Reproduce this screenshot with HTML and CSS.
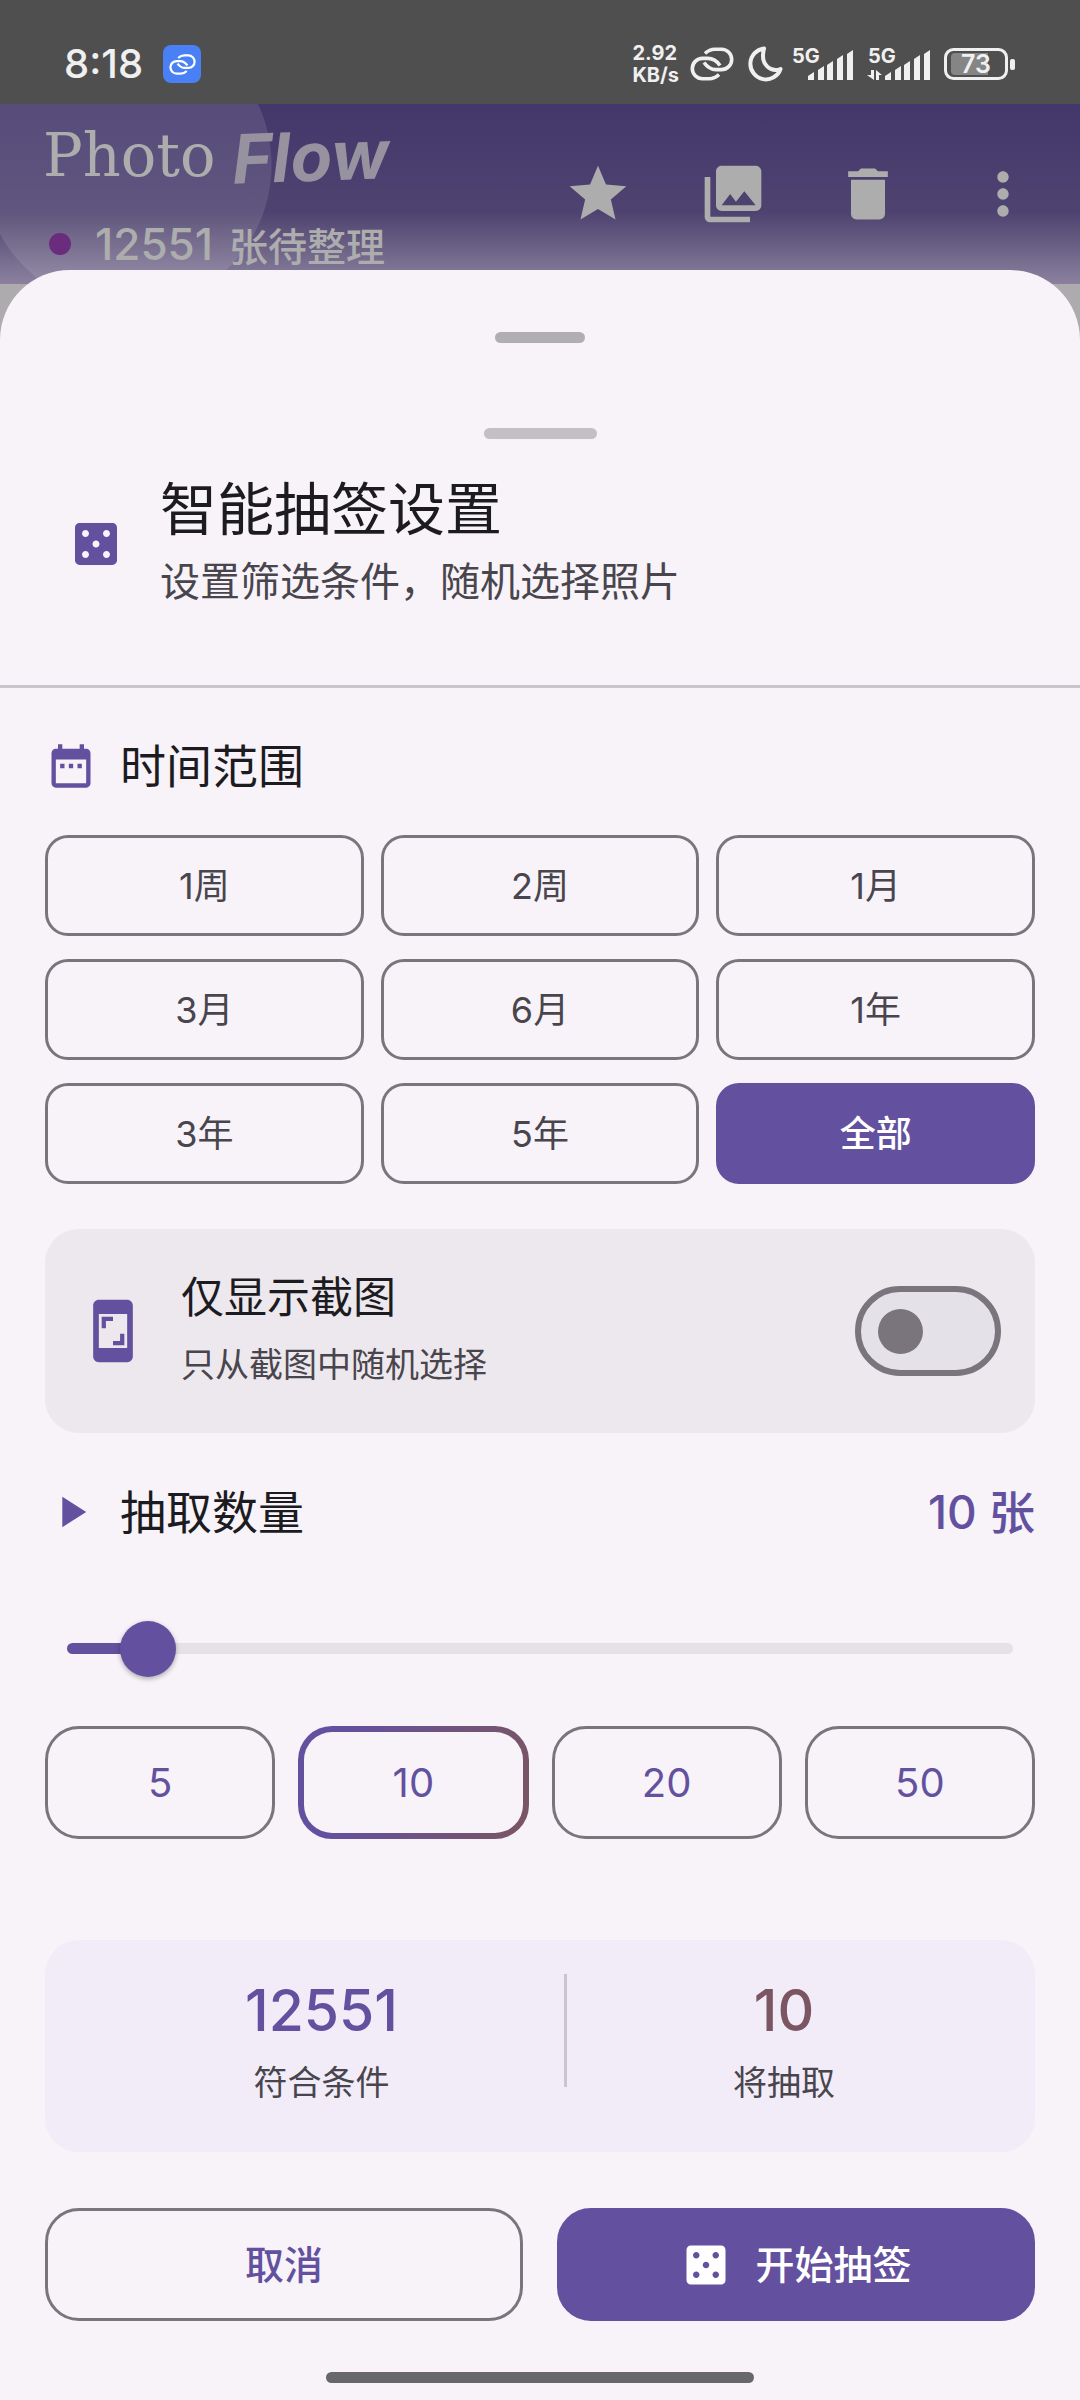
FILE: index.html
```html
<!DOCTYPE html>
<html lang="zh-CN">
<head>
<meta charset="utf-8">
<meta name="viewport" content="width=device-width, initial-scale=1">
<title>Photo Flow</title>
<link rel="stylesheet" href="styles.css">
</head>
<body>
<svg class="defs" aria-hidden="true">
  <symbol id="dice" viewBox="0 0 24 24"><path d="M19 3H5c-1.1 0-2 .9-2 2v14c0 1.100.9 2 2 2h14c1.100 0 2-.9 2-2V5c0-1.100-.9-2-2-2zM7.500 18c-.83 0-1.500-.67-1.500-1.500S6.670 15 7.500 15s1.500.67 1.500 1.500S8.330 18 7.500 18zm0-9C6.670 9 6 8.330 6 7.500S6.670 6 7.500 6 9 6.670 9 7.500 8.330 9 7.500 9zm4.500 4.500c-.83 0-1.500-.67-1.500-1.500s.67-1.500 1.500-1.500 1.500.67 1.500 1.500-.67 1.500-1.500 1.500zm4.500 4.500c-.83 0-1.500-.67-1.500-1.500s.67-1.500 1.500-1.500 1.500.67 1.500 1.500-.67 1.500-1.500 1.500zm0-9c-.83 0-1.500-.67-1.500-1.500S15.670 6 16.500 6s1.500.67 1.500 1.500S17.330 9 16.500 9z"/></symbol>
  <symbol id="link" viewBox="0 0 44 34"><g fill="none" stroke="currentColor" stroke-width="3.600"><path d="M15 6.500C18 3.500 21 2.200 25 2.200H31.500a10.200 10.200 0 0 1 0 20.400H26C21 22.600 17.500 20.500 14 15.500"/><path d="M29 27.500C26 30.500 23 31.800 19 31.800H12.500a10.200 10.200 0 0 1 0-20.400H18C23 11.400 26.500 13.500 30 18.500"/></g></symbol>
</svg>

<div class="statusbar">
  <span class="clock">8:18</span>
  <span class="app-badge"><svg width="27" height="21"><use href="#link"/></svg></span>
  <div class="indicators">
    <span class="netspeed"><span>2.92</span><span>KB/s</span></span>
    <svg class="ind-link" width="44" height="34"><use href="#link"/></svg>
    <svg class="ind-moon" width="36" height="36" viewBox="0 0 36 36"><path d="M17 2.500A15.500 15.500 0 1 0 33.500 23C25 26.500 12.500 20 17 2.500Z" fill="none" stroke="currentColor" stroke-width="4" stroke-linejoin="round"/></svg>
    <svg class="ind-signal" width="62" height="48" viewBox="0 -6 62 48"><text x="0" y="17">5G</text><path d="M16 34v-4l6-4v8zM26 34V24l6-4v14zM35 34V19l6-4v19zM45 34V13l6-4v25zM55 34V8l6-4v30z"/></svg>
    <svg class="ind-signal" width="64" height="48" viewBox="0 -6 64 48"><text x="1" y="17">5G</text><path d="M18 34v-4l6-4v8zM28 34V24l6-4v14zM37 34V19l6-4v19zM47 34V13l6-4v25zM57 34V8l6-4v30z"/><path d="M4 24h3v10L0 29h4zM9 34V24l6 5h-3v5z"/></svg>
    <svg class="ind-battery" width="72" height="32" viewBox="0 0 72 32"><rect x="1.500" y="1.500" width="61" height="29" rx="8" fill="none" stroke="currentColor" stroke-width="3"/><path d="M11 5H44V27H11a4 4 0 0 1-4-4V9a4 4 0 0 1 4-4z" fill="#858585"/><rect x="66" y="11" width="5" height="11" rx="2"/><text x="32" y="25" text-anchor="middle">73</text></svg>
  </div>
</div>

<header class="appbar">
  <div class="brand">
    <h1 class="brand-title"><span class="brand-photo">Photo</span><span class="brand-flow">Flow</span></h1>
    <p class="brand-count"><i class="dot"></i><span class="count-num">12551</span><span>张待整理</span></p>
  </div>
  <nav class="actions">
    <button class="icon-btn" aria-label="收藏"><svg viewBox="0 0 24 24"><path d="M12 17.270L18.180 21l-1.640-7.030L22 9.240l-7.190-.61L12 2 9.190 8.630 2 9.240l5.460 4.730L5.820 21z"/></svg></button>
    <button class="icon-btn" aria-label="相册"><svg viewBox="0 0 24 24"><path d="M22 16V4c0-1.100-.9-2-2-2H8c-1.100 0-2 .9-2 2v12c0 1.100.9 2 2 2h12c1.100 0 2-.9 2-2zm-11-4l2.030 2.710L16 11l4 5H8l3-4zM2 6v14c0 1.100.9 2 2 2h14v-2H4V6H2z"/></svg></button>
    <button class="icon-btn" aria-label="删除"><svg viewBox="0 0 24 24"><path d="M6 19c0 1.100.9 2 2 2h8c1.100 0 2-.9 2-2V7H6v12zM19 4h-3.500l-1-1h-5l-1 1H5v2h14V4z"/></svg></button>
    <button class="icon-btn" aria-label="更多"><svg viewBox="0 0 24 24"><path d="M12 8c1.100 0 2-.9 2-2s-.9-2-2-2-2 .9-2 2 .9 2 2 2zm0 2c-1.100 0-2 .9-2 2s.9 2 2 2 2-.9 2-2-.9-2-2-2zm0 6c-1.100 0-2 .9-2 2s.9 2 2 2 2-.9 2-2-.9-2-2-2z"/></svg></button>
  </nav>
</header>

<main class="sheet">
  <div class="grip"></div>
  <div class="grip grip-wide"></div>
  <div class="sheet-head">
    <svg class="head-icon"><use href="#dice"/></svg>
    <div>
      <h2 class="head-title">智能抽签设置</h2>
      <p class="head-sub">设置筛选条件，随机选择照片</p>
    </div>
  </div>

  <div class="content">
    <h3 class="section-title">
      <svg class="section-icon" viewBox="0 0 24 24"><path d="M9 11H7v2h2v-2zm4 0h-2v2h2v-2zm4 0h-2v2h2v-2zm2-7h-1V2h-2v2H8V2H6v2H5c-1.110 0-1.990.9-1.990 2L3 20c0 1.100.89 2 2 2h14c1.100 0 2-.9 2-2V6c0-1.100-.9-2-2-2zm0 16H5V9h14v11z"/></svg>
      <span>时间范围</span>
    </h3>
    <div class="ranges">
      <button class="range">1周</button><button class="range">2周</button><button class="range">1月</button>
      <button class="range">3月</button><button class="range">6月</button><button class="range">1年</button>
      <button class="range">3年</button><button class="range">5年</button><button class="range range-on">全部</button>
    </div>

    <label class="option" for="only-shots">
      <svg class="option-icon" viewBox="0 0 24 24"><path d="M17 1H7c-1.100 0-2 .9-2 2v18c0 1.100.9 2 2 2h10c1.100 0 2-.9 2-2V3c0-1.100-.9-2-2-2zm0 17H7V6h10v12z"/><path d="M8 7h4v1.500H9.500V11H8zM16 17h-4v-1.500h2.500V13H16z"/></svg>
      <span class="option-text"><span class="option-title">仅显示截图</span><span class="option-sub">只从截图中随机选择</span></span>
      <input class="switch" type="checkbox" id="only-shots">
    </label>

    <div class="amount-head">
      <h3 class="section-title">
        <svg class="section-icon" viewBox="0 0 24 24"><path d="M8 5v14l11-7z"/></svg>
        <label for="amount">抽取数量</label>
      </h3>
      <output class="amount-value" for="amount">10 张</output>
    </div>
    <input class="slider" type="range" id="amount" min="4" max="104" value="10">
    <div class="presets">
      <button class="preset">5</button><button class="preset preset-on">10</button><button class="preset">20</button><button class="preset">50</button>
    </div>

    <div class="stats">
      <div class="stat"><span class="stat-num">12551</span><span class="stat-label">符合条件</span></div>
      <div class="stat-line"></div>
      <div class="stat"><span class="stat-num stat-num-alt">10</span><span class="stat-label">将抽取</span></div>
    </div>

    <div class="footer">
      <button class="btn">取消</button>
      <button class="btn btn-primary"><svg class="btn-icon"><use href="#dice"/></svg><span>开始抽签</span></button>
    </div>
  </div>
  <div class="home-bar"></div>
</main>
</body>
</html>
```
FILE: styles.css
```css
:root {
  --primary: #63519f;
  --tertiary: #7b5562;
  --outline: #7a757c;
  --surface: #f7f3f9;
  --text: #1c1b1f;
  --text-soft: #49454d;
  --dim: #adadad;
}

* { box-sizing: border-box; }

body {
  margin: 0;
  background: #adabad;
  color: var(--text);
  font-family: Inter, "Noto Sans CJK SC", sans-serif;
}

h1, h2, h3, p { margin: 0; font-weight: 400; }

button {
  padding: 0;
  border: 0;
  background: none;
  color: inherit;
  font: inherit;
}

svg { display: block; fill: currentColor; flex: none; }

.defs { position: absolute; width: 0; height: 0; }

/* status bar */
.statusbar {
  display: flex;
  align-items: center;
  padding: 24px 64px 0;
  height: 104px;
  background: #4f4f4f;
  color: #f0f0f0;
}
.clock { font-size: 40px; font-weight: 500; line-height: 60px; }
.app-badge {
  display: grid;
  place-items: center;
  width: 38px;
  height: 38px;
  margin-left: 20px;
  border-radius: 8px;
  background: #4a80f5;
  color: #fff;
}
.indicators { display: flex; align-items: center; gap: 13px; margin-left: auto; }
.netspeed { display: flex; flex-direction: column; margin-right: -2px; font-size: 20px; font-weight: 700; line-height: 22px; }
.ind-moon { margin-right: -4px; }
.ind-signal { font-size: 20px; font-weight: 700; }
.ind-battery { font-size: 25px; font-weight: 600; }

/* app bar */
.appbar {
  display: flex;
  justify-content: space-between;
  align-items: center;
  height: 180px;
  padding: 0 10px 0 43px;
  background:
    radial-gradient(circle 145px at 127px 61px, rgba(255, 255, 255, .1) 144px, transparent 145px),
    linear-gradient(#43376b, #4e4370 60%, #5f557c 72%, #8b819e);
  color: var(--dim);
}
.brand-title { display: flex; align-items: center; gap: 17px; height: 100px; }
.brand-photo { font: 400 59px/70px "DejaVu Serif", serif; }
.brand-flow {
  color: #97929f;
  font-size: 68px;
  font-style: italic;
  font-weight: 700;
  line-height: 70px;
  transform: rotate(-2deg);
}
.brand-count {
  display: flex;
  align-items: center;
  gap: 16px;
  height: 76px;
  padding-left: 6px;
  font-size: 39px;
  font-weight: 500;
}
.dot { width: 22px; height: 22px; margin-right: 8px; border-radius: 50%; background: #6a2c7c; }
.count-num { font-size: 44px; }
.actions { display: flex; }
.icon-btn { display: grid; place-items: center; width: 135px; height: 135px; }
.icon-btn svg { width: 68px; height: 68px; }

/* bottom sheet */
.sheet {
  position: relative;
  margin-top: -14px;
  padding: 62px 0 17px;
  border-radius: 70px 70px 0 0;
  background: var(--surface);
}
.grip { width: 90px; height: 11px; margin: 0 auto; border-radius: 6px; background: #b0adb3; }
.grip-wide { width: 113px; margin-top: 85px; background: #c3bfc5; }
.sheet-head {
  display: flex;
  align-items: center;
  gap: 36px;
  padding: 33px 68px 69px;
  border-bottom: 3px solid #c9c4cc;
}
.head-icon { width: 56px; height: 56px; color: var(--primary); }
.head-title { font-size: 57px; line-height: 76px; }
.head-sub { font-size: 40px; line-height: 68px; color: var(--text-soft); }

.content { padding: 48px 45px 0; }
.section-title {
  display: flex;
  align-items: center;
  gap: 23px;
  font-size: 46px;
  line-height: 60px;
}
.section-icon { width: 52px; height: 52px; color: var(--primary); }

.ranges {
  display: grid;
  grid-template-columns: repeat(3, 1fr);
  gap: 23px 17px;
  margin-top: 39px;
}
.range {
  height: 101px;
  border: 3px solid var(--outline);
  border-radius: 23px;
  color: var(--text-soft);
  font-size: 36px;
  line-height: 48px;
}
.range-on { border-color: var(--primary); background: var(--primary); color: #fff; font-weight: 500; }

.option {
  display: flex;
  align-items: center;
  margin-top: 45px;
  padding: 34px;
  border-radius: 34px;
  background: #ede8ed;
}
.option-icon { width: 68px; height: 68px; color: var(--primary); }
.option-text { display: flex; flex-direction: column; flex: 1; padding-left: 34px; }
.option-title { font-size: 43px; line-height: 68px; }
.option-sub { font-size: 34px; line-height: 68px; color: var(--text-soft); }
.switch {
  appearance: none;
  display: flex;
  align-items: center;
  width: 146px;
  height: 90px;
  margin: 0;
  padding: 0 17px;
  border: 6px solid var(--outline);
  border-radius: 45px;
  background: #e5e1e8;
}
.switch::before { content: ""; width: 45px; height: 45px; border-radius: 50%; background: var(--outline); }
.switch:checked { justify-content: flex-end; border-color: var(--primary); }

.amount-head { display: flex; justify-content: space-between; align-items: center; margin-top: 49px; }
.amount-value { color: var(--primary); font-size: 46px; font-weight: 500; line-height: 60px; }

.slider {
  appearance: none;
  display: block;
  width: calc(100% - 44px);
  height: 56px;
  margin: 78px 22px 0;
  background: none;
}
.slider::-webkit-slider-runnable-track {
  height: 11px;
  border-radius: 6px;
  background: linear-gradient(90deg, var(--primary) 9%, #e5e1e6 9%);
}
.slider::-webkit-slider-thumb {
  appearance: none;
  width: 56px;
  height: 56px;
  margin-top: -22px;
  border-radius: 50%;
  background: var(--primary);
  box-shadow: 0 2px 5px rgba(0, 0, 0, .3);
}

.presets { display: grid; grid-template-columns: repeat(4, 1fr); gap: 23px; margin-top: 50px; }
.preset {
  height: 113px;
  border: 3px solid var(--outline);
  border-radius: 34px;
  color: var(--primary);
  font-size: 40px;
}
.preset-on {
  border: 6px solid transparent;
  background:
    linear-gradient(var(--surface), var(--surface)) padding-box,
    linear-gradient(100deg, var(--primary) 20%, var(--tertiary)) border-box;
}

.stats {
  display: flex;
  justify-content: space-evenly;
  margin-top: 101px;
  padding: 34px;
  border-radius: 34px;
  background: #f2ecf9;
}
.stat { display: flex; flex-direction: column; align-items: center; }
.stat-num { color: var(--primary); font-size: 57px; font-weight: 500; line-height: 74px; }
.stat-num-alt { color: var(--tertiary); }
.stat-label { font-size: 34px; line-height: 70px; color: var(--text-soft); }
.stat-line { width: 3px; height: 113px; background: #c9c4d0; }

.footer { display: grid; grid-template-columns: 1fr 1fr; gap: 34px; margin-top: 56px; }
.btn {
  display: flex;
  justify-content: center;
  align-items: center;
  gap: 23px;
  height: 113px;
  border: 3px solid var(--outline);
  border-radius: 34px;
  color: var(--primary);
  font-size: 39px;
  font-weight: 500;
  line-height: 52px;
}
.btn-primary { border-color: var(--primary); background: var(--primary); color: #fff; }
.btn-icon { width: 52px; height: 52px; }

.home-bar { width: 428px; height: 11px; margin: 51px auto 0; border-radius: 6px; background: #68676a; }
```
